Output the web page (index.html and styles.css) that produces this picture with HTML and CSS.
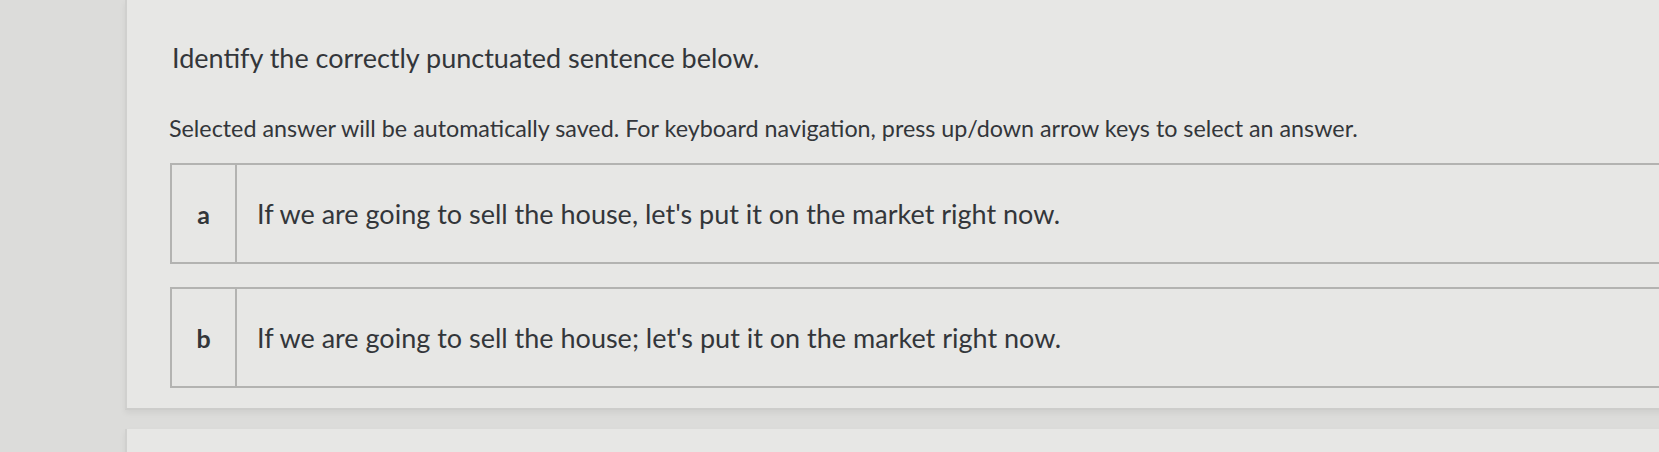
FILE: index.html
```html
<!DOCTYPE html>
<html lang="en">
<head>
<meta charset="utf-8">
<title>Question</title>
<link rel="stylesheet" href="styles.css">
</head>
<body>
<div class="page">
  <div class="card">
    <h1 class="title">Identify the correctly punctuated sentence below.</h1>
    <p class="hint">Selected answer will be automatically saved. For keyboard navigation, press up/down arrow keys to select an answer.</p>
    <ul class="options">
      <li class="option">
        <span class="letter">a</span>
        <span class="text">If we are going to sell the house, let's put it on the market right now.</span>
      </li>
      <li class="option">
        <span class="letter">b</span>
        <span class="text">If we are going to sell the house; let's put it on the market right now.</span>
      </li>
    </ul>
  </div>
  <div class="card card-next"></div>
</div>
</body>
</html>
```

FILE: styles.css
```css
html, body {
  margin: 0;
  padding: 0;
}
body {
  background: #dcdcda;
  width: 1659px;
  height: 452px;
  overflow: hidden;
  font-family: Lato, "Open Sans", sans-serif;
  color: #33363a;
}
.page {
  padding-left: 125px;
  display: flex;
  flex-direction: column;
  gap: 19px;
}
.card {
  background: #e7e7e5;
  margin-right: -100px;
  border-left: 2px solid #d0d0ce;
  border-bottom: 2px solid #cdcdcb;
  box-shadow: 0 3px 6px rgba(0,0,0,0.06);
  padding: 42px 0 20px 45px;
}
.card-next {
  height: 60px;
  padding: 0;
  border-bottom: none;
}
.title {
  margin: 0;
  font-size: 27px;
  line-height: 32px;
  font-weight: 400;
}
.hint {
  margin: 40px 0 0 -3px;
  font-size: 23.3px;
  line-height: 28px;
}
.options {
  list-style: none;
  margin: 21px 0 0 -2px;
  padding: 0;
  display: flex;
  flex-direction: column;
  gap: 23px;
}
.option {
  box-sizing: border-box;
  display: flex;
  align-items: stretch;
  height: 101px;
  border: 2px solid #b3b3b1;
  border-right: none;
}
.letter {
  width: 63px;
  flex: none;
  border-right: 2px solid #b3b3b1;
  display: flex;
  align-items: center;
  justify-content: center;
  font-size: 25px;
  font-weight: 700;
}
.text {
  display: flex;
  align-items: center;
  padding-left: 20px;
  font-size: 27px;
}
```
